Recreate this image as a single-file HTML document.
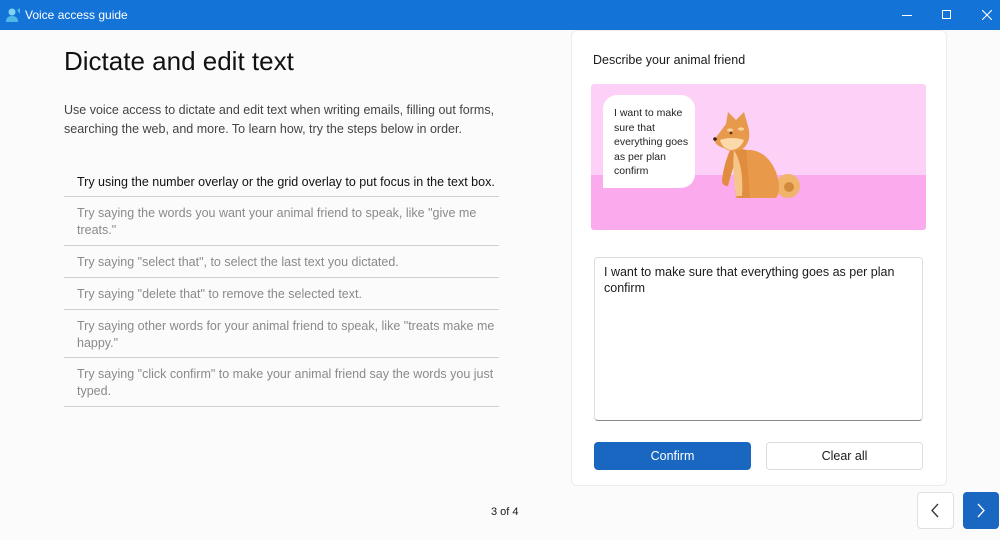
<!DOCTYPE html>
<html><head><style>
*{margin:0;padding:0;box-sizing:border-box}
body{width:1000px;height:540px;overflow:hidden;background:#fbfbfb;font-family:"Liberation Sans",sans-serif;position:relative;color:#1a1a1a}
.tb{position:absolute;left:0;top:0;width:1000px;height:30px;background:#1473d6;color:#fff;font-size:12px}
.a{position:absolute}
.row{position:absolute;left:64px;width:435px;border-bottom:1px solid #d0d0d0;font-size:12.5px;color:#8a8a8a;padding-left:13px;line-height:17px}
</style></head><body>
<div class="tb">
<svg class="a" style="left:6px;top:8px" width="14" height="14"><circle cx="6" cy="4" r="3.5" fill="#7fd3f0"/><path d="M0 14 Q0 8 6 8 Q12 8 12 14Z" fill="#4fb8e8"/><path d="M11 2 L14 0 L14 6Z" fill="#4fb8e8"/></svg>
<span class="a" style="left:25px;top:8px">Voice access guide</span>
<div class="a" style="left:902px;top:15px;width:10px;height:1px;background:#fff"></div>
<div class="a" style="left:942px;top:10px;width:9px;height:9px;border:1px solid #fff"></div>
<svg class="a" style="left:982px;top:10px" width="10" height="10"><path d="M0 0L10 10M10 0L0 10" stroke="#fff" stroke-width="1.1"/></svg>
</div>
<div class="a" style="left:64px;top:46px;font-size:26px;font-weight:500;color:#111">Dictate and edit text</div>
<div class="a" style="left:64px;top:101px;width:440px;font-size:12.5px;line-height:19px;color:#444">Use voice access to dictate and edit text when writing emails, filling out forms, searching the web, and more. To learn how, try the steps below in order.</div>
<div class="row" style="top:174px;height:23px;color:#111">Try using the number overlay or the grid overlay to put focus in the text box.</div>
<div class="row" style="top:205px;height:41px">Try saying the words you want your animal friend to speak, like "give me treats."</div>
<div class="row" style="top:254px;height:24px">Try saying "select that", to select the last text you dictated.</div>
<div class="row" style="top:286px;height:24px">Try saying "delete that" to remove the selected text.</div>
<div class="row" style="top:318px;height:40px">Try saying other words for your animal friend to speak, like "treats make me happy."</div>
<div class="row" style="top:366px;height:41px">Try saying "click confirm" to make your animal friend say the words you just typed.</div>
<div class="a" style="left:571px;top:30px;width:376px;height:456px;background:#fff;border:1px solid #ececec;border-radius:6px"></div>
<div class="a" style="left:593px;top:53px;font-size:12.5px">Describe your animal friend</div>
<div class="a" style="left:591px;top:84px;width:335px;height:146px;background:#fdd0f7;border-radius:3px;overflow:hidden"><div class="a" style="left:0;top:91px;width:335px;height:55px;background:#fbaaee"></div></div>
<div class="a" style="left:603px;top:95px;width:92px;height:93px;background:#fff;border-radius:14px 14px 14px 0;font-size:10.5px;line-height:14.5px;padding:11px 0 0 11px;color:#222">I want to make sure that everything goes as per plan confirm</div>
<svg class="a" style="left:710px;top:110px" width="95" height="92">
<circle cx="78" cy="76" r="12" fill="#f0b56a"/><circle cx="79" cy="77" r="5" fill="#d48a3c"/>
<path d="M34 40 Q56 38 66 62 Q72 80 66 88 L26 88 Q22 60 34 40Z" fill="#e9994a"/>
<path d="M22 36 Q14 52 12 70 Q12 76 18 76 Q22 60 26 50 L28 88 L40 88 Q38 60 36 40Z" fill="#e08d40"/>
<path d="M24 40 Q34 56 32 86 L26 86 Q22 60 24 40Z" fill="#f6c58a"/>
<path d="M16 14 L18 2 L26 10 L34 2 L38 16 Q42 30 34 38 Q22 44 14 38 Q6 36 4 30 Q10 22 16 14Z" fill="#e89a4c"/>
<path d="M10 30 Q22 26 34 30 Q30 40 20 40 Q12 38 10 30Z" fill="#fbd9aa"/>
<ellipse cx="20" cy="20" rx="3" ry="1.6" fill="#f7d2a2"/><ellipse cx="31" cy="19" rx="3" ry="1.6" fill="#f7d2a2"/>
<circle cx="21" cy="23" r="1.4" fill="#5a3212"/><circle cx="5" cy="29" r="1.8" fill="#3a2010"/>
</svg>
<div class="a" style="left:594px;top:257px;width:329px;height:164px;border:1px solid #ddd;border-bottom:1px solid #888;border-radius:4px;padding:6px 9px;font-size:12.5px;line-height:16px">I want to make sure that everything goes as per plan confirm</div>
<div class="a" style="left:594px;top:442px;width:157px;height:28px;background:#1967c0;border-radius:4px;color:#fff;font-size:12.5px;text-align:center;line-height:28px">Confirm</div>
<div class="a" style="left:766px;top:442px;width:157px;height:28px;background:#fff;border:1px solid #ddd;border-radius:4px;font-size:12.5px;text-align:center;line-height:26px">Clear all</div>
<div class="a" style="left:491px;top:506px;font-size:11px">3 of 4</div>
<div class="a" style="left:917px;top:492px;width:37px;height:37px;background:#fff;border:1px solid #e0e0e0;border-radius:4px"><svg width="35" height="35"><path d="M20 11 L14 17.5 L20 24" stroke="#333" stroke-width="1.3" fill="none"/></svg></div>
<div class="a" style="left:963px;top:492px;width:36px;height:37px;background:#1967c0;border-radius:4px"><svg width="36" height="37"><path d="M15 12 L21 18.5 L15 25" stroke="#fff" stroke-width="1.3" fill="none"/></svg></div>
</body></html>
